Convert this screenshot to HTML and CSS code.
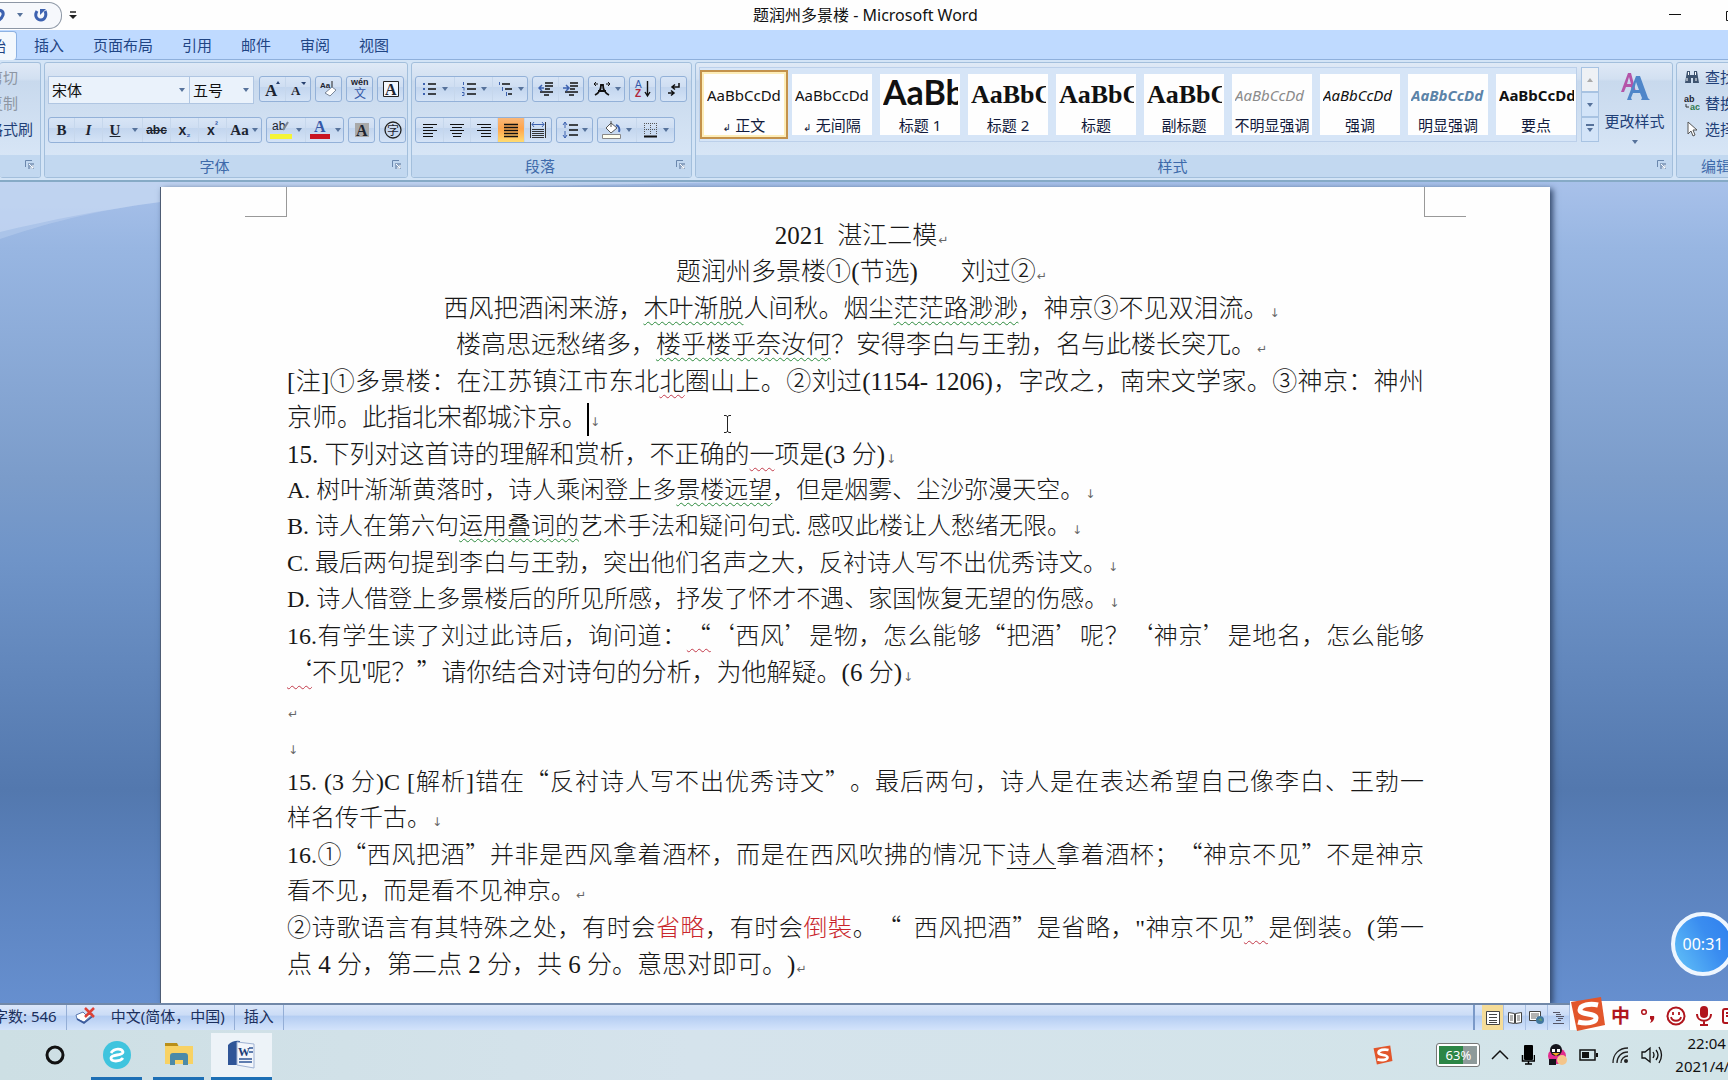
FILE: index.html
```html
<!DOCTYPE html>
<html lang="zh-CN">
<head>
<meta charset="utf-8">
<title>题润州多景楼 - Microsoft Word</title>
<link rel="stylesheet" href="styles.css">
</head>
<body>
<header class="titlebar">
  <div class="quick">
    <button class="plain" aria-label="撤销"><svg width="14" height="16" viewBox="0 0 14 16"><path d="M1 5c6-4 11-1 10 3-1 3-3 5-6 6" fill="none" stroke="#3d62b0" stroke-width="3"/></svg></button>
    <i class="arrow"></i>
    <button class="plain" aria-label="恢复"><svg width="14" height="14" viewBox="0 0 14 14"><path d="M3 3c-3 5 0 9 4 9s6-5 4-9" fill="none" stroke="#3d62b0" stroke-width="3"/><path d="M6 1v6L12 1z" fill="#3d62b0"/></svg></button>
  </div>
  <button class="plain" aria-label="自定义快速访问工具栏"><svg width="8" height="9" viewBox="0 0 8 9"><path d="M1 1h6" stroke="#222" stroke-width="1.5"/><path d="M0 4h8l-4 4z" fill="#222"/></svg></button>
  <h1 class="caption">题润州多景楼 - Microsoft Word</h1>
  <div class="window-buttons">
    <button class="plain" aria-label="最小化"><svg width="14" height="14"><path d="M1 6.500h12" stroke="#111"/></svg></button>
    <button class="plain" aria-label="还原"><svg width="14" height="14"><path d="M.5 3.500h10v9H.5z" fill="none" stroke="#111"/></svg></button>
  </div>
</header>

<nav class="tabs">
  <a href="#home" class="tab active">开始</a>
  <a href="#insert" class="tab">插入</a>
  <a href="#layout" class="tab">页面布局</a>
  <a href="#ref" class="tab">引用</a>
  <a href="#mail" class="tab">邮件</a>
  <a href="#review" class="tab">审阅</a>
  <a href="#view" class="tab">视图</a>
</nav>

<div class="ribbon">
  <section class="group clipboard">
    <div class="group-body stack">
      <button class="plain off">剪切</button>
      <button class="plain off">复制</button>
      <button class="plain">格式刷</button>
    </div>
    <footer class="group-name"><span></span><svg class="launch" width="9" height="9" viewBox="0 0 9 9"><path d="M.5 7V.5H7" fill="none" stroke="#6a87ad"/><path d="M3 3h6v6H3z" fill="#8ba3c2"/><path d="M4 4l4 4M8 5v3H5" stroke="#fff" fill="none"/></svg></footer>
  </section>

  <section class="group font">
    <div class="group-body rows">
      <div class="row">
        <div class="combos">
          <label class="combo wide"><select aria-label="字体"><option>宋体</option></select></label>
          <label class="combo"><select aria-label="字号"><option>五号</option></select></label>
        </div>
        <div class="set">
          <button class="tool"><svg width="18" height="18" viewBox="0 0 18 18"><text x="1" y="16" class="serif" font-size="17">A</text><path d="M12 4l2-3 2 3z" fill="#27406e"/></svg></button>
          <button class="tool"><svg width="18" height="18" viewBox="0 0 18 18"><text x="2" y="15" class="serif" font-size="13">A</text><path d="M12 2h5l-2 3z" fill="#27406e"/></svg></button>
        </div>
        <div class="set"><button class="tool"><svg width="20" height="20" viewBox="0 0 20 20"><text x="1" y="9" font-size="8" class="bold sans">Aa</text><path d="M13 2v8" stroke="#222"/><path d="M6 14l7-6 4 3-6 6z" fill="#fff" stroke="#7b8798"/></svg></button></div>
        <div class="set"><button class="tool"><svg width="20" height="22" viewBox="0 0 20 22"><text x="1" y="7" font-size="9" class="bold sans">wén</text><text x="4" y="20" font-size="12" class="blue cjk">文</text></svg></button></div>
        <div class="set"><button class="tool"><svg width="18" height="18" viewBox="0 0 18 18"><path d="M1.500 1.500h15v15h-15z" fill="#f3f7fd" stroke="#222"/><text x="3" y="15" class="serif" font-size="16">A</text></svg></button></div>
      </div>
      <div class="row">
        <div class="set">
          <button class="tool serif-b">B</button>
          <button class="tool serif-i">I</button>
          <button class="tool serif-b"><u>U</u></button>
          <button class="tool w15"><i class="arrow"></i></button>
          <button class="tool small"><s>abc</s></button>
          <button class="tool bold">x<sub>₂</sub></button>
          <button class="tool bold">x<sup>²</sup></button>
          <button class="tool w36 serif-a">Aa<i class="arrow"></i></button>
        </div>
        <div class="set">
          <button class="tool w38"><svg width="22" height="22" viewBox="0 0 22 22"><text x="2" y="11" font-size="12" class="sans">ab</text><path d="M13 11l5-8" stroke="#7b8798" stroke-width="2"/><path d="M0 15h22v5H0z" fill="#f4f436"/></svg><i class="arrow"></i></button>
          <button class="tool w38"><svg width="22" height="22" viewBox="0 0 22 22"><text x="5" y="13" font-size="16" class="serif blue">A</text><path d="M1 15h20v5H1z" fill="#c91422"/></svg><i class="arrow"></i></button>
        </div>
        <div class="set"><button class="tool"><svg width="16" height="16" viewBox="0 0 16 16"><path d="M1 1h14v14H1z" fill="#a9a9a9"/><text x="2" y="14" class="serif" font-size="16">A</text></svg></button></div>
        <div class="set"><button class="tool"><svg width="18" height="18" viewBox="0 0 18 18"><circle cx="9" cy="9" r="8" fill="none" stroke="#222" stroke-width="1.300"/><text x="3" y="14" font-size="12" class="cjk">字</text></svg></button></div>
      </div>
    </div>
    <footer class="group-name"><span>字体</span><svg class="launch" width="9" height="9" viewBox="0 0 9 9"><path d="M.5 7V.5H7" fill="none" stroke="#6a87ad"/><path d="M3 3h6v6H3z" fill="#8ba3c2"/><path d="M4 4l4 4M8 5v3H5" stroke="#fff" fill="none"/></svg></footer>
  </section>

  <section class="group para">
    <div class="group-body rows">
      <div class="row">
        <div class="set">
          <button class="tool w38"><svg width="16" height="16" viewBox="0 0 16 16"><path d="M6 3h8M6 8h8M6 13h8" stroke="#111" stroke-width="1.300"/><path d="M1 2h2v2H1zM1 7h2v2H1zM1 12h2v2H1z" fill="#3d62b0"/></svg><i class="arrow"></i></button>
          <button class="tool w38"><svg width="16" height="16" viewBox="0 0 16 16"><path d="M6 3h9M6 8h9M6 13h9" stroke="#111" stroke-width="1.300"/><path d="M2.500 1v3M1 6.500h2v3M1 11.500h2v3H1" stroke="#3d62b0" fill="none"/></svg><i class="arrow"></i></button>
          <button class="tool w36"><svg width="17" height="16" viewBox="0 0 17 16"><path d="M5 3h8M8 8h7M11 13h4" stroke="#111" stroke-width="1.300"/><path d="M2.500 1v3M5.500 6v4M9.500 11v4" stroke="#3d62b0"/></svg><i class="arrow"></i></button>
        </div>
        <div class="set">
          <button class="tool"><svg width="16" height="16" viewBox="0 0 16 16"><path d="M7 2h8M7 5h8M7 8h5M2 11h13M6 14h5" stroke="#111" stroke-width="1.500"/><path d="M6 7H1M4 4L1 7l3 3" stroke="#3d62b0" fill="none" stroke-width="1.500"/></svg></button>
          <button class="tool"><svg width="16" height="16" viewBox="0 0 16 16"><path d="M7 2h8M7 5h8M7 8h5M2 11h13M6 14h5" stroke="#111" stroke-width="1.500"/><path d="M0 7h5M3 4l3 3-3 3" stroke="#3d62b0" fill="none" stroke-width="1.500"/></svg></button>
        </div>
        <div class="set"><button class="tool w36"><svg width="18" height="16" viewBox="0 0 18 16"><path d="M2 14C6 12 8 9 8 4h2c0 5 2 8 6 10M5 10h8" stroke="#111" stroke-width="1.800" fill="none"/><path d="M1 3h4M3 1L1 3l2 2M17 3h-4M15 1l2 2-2 2" stroke="#111" fill="none"/></svg><i class="arrow"></i></button></div>
        <div class="set"><button class="tool"><svg width="18" height="18" viewBox="0 0 18 18"><text x="1" y="8" font-size="10" class="blue sans">A</text><text x="1" y="17" font-size="10" class="red bold sans">Z</text><path d="M13.500 1v14M11 12l2.500 4 2.500-4" stroke="#111" stroke-width="1.400" fill="none"/></svg></button></div>
        <div class="set"><button class="tool"><svg width="16" height="16" viewBox="0 0 16 16"><path d="M13 2v4H7M9 3.500L6 6l3 2.500M2 12h5M5 9.500l3 2.500-3 2.500" stroke="#111" stroke-width="1.500" fill="none"/></svg></button></div>
      </div>
      <div class="row">
        <div class="set align">
          <button class="tool"><svg width="16" height="16"><path d="M1 2.500h14M1 5.500h10M1 8.500h14M1 11.500h10M1 14.500h10" stroke="#111"/></svg></button>
          <button class="tool"><svg width="16" height="16"><path d="M1 2.500h14M3 5.500h10M1 8.500h14M3 11.500h10M4 14.500h8" stroke="#111"/></svg></button>
          <button class="tool"><svg width="16" height="16"><path d="M1 2.500h14M5 5.500h10M1 8.500h14M5 11.500h10M5 14.500h10" stroke="#111"/></svg></button>
          <button class="tool on"><svg width="16" height="16"><path d="M1 2.500h14M1 5.500h14M1 8.500h14M1 11.500h14M1 14.500h14" stroke="#111" stroke-width="1.500"/></svg></button>
          <button class="tool"><svg width="18" height="18"><path d="M1.500 1v16M16.500 1v16" stroke="#333"/><path d="M3 3.500h12M5 1L3 3.500 5 6M13 1l2 2.500L13 6" stroke="#3d62b0" fill="none"/><path d="M3 8.500h12M3 10.500h12M3 12.500h12M3 14.500h12M3 16.500h12" stroke="#333"/></svg></button>
        </div>
        <div class="set"><button class="tool w36"><svg width="16" height="18"><path d="M7 4h9M7 9h9M7 14h9" stroke="#111" stroke-width="1.500"/><path d="M3 1v6M1 4l2-3 2 3M3 10v7M1 14l2 3 2-3" stroke="#3d62b0" fill="none"/></svg><i class="arrow"></i></button></div>
        <div class="set">
          <button class="tool w38"><svg width="20" height="20"><path d="M4 8l5-5 6 5-6 5z" fill="#fff" stroke="#555"/><path d="M9 1v6" stroke="#555"/><path d="M14 5c3 1 4 4 3 7" stroke="#3d62b0" stroke-width="2" fill="none"/><path d="M.5 14.500h18v4H.5z" fill="#fffff0" stroke="#888"/></svg><i class="arrow"></i></button>
          <button class="tool w38"><svg width="16" height="16"><path d="M1.500 1v12M7.500 1v12M13.500 1v12M1 1.500h13M1 7.500h13" stroke="#555" stroke-dasharray="1 1"/><path d="M1 14.500h13" stroke="#111" stroke-width="2"/></svg><i class="arrow"></i></button>
        </div>
      </div>
    </div>
    <footer class="group-name"><span>段落</span><svg class="launch" width="9" height="9" viewBox="0 0 9 9"><path d="M.5 7V.5H7" fill="none" stroke="#6a87ad"/><path d="M3 3h6v6H3z" fill="#8ba3c2"/><path d="M4 4l4 4M8 5v3H5" stroke="#fff" fill="none"/></svg></footer>
  </section>

  <section class="group styles">
    <div class="group-body gallery-row">
      <div class="gallery">
        <button class="style picked"><span class="sample">AaBbCcDd</span><span class="name"><small>↲</small> 正文</span></button>
        <button class="style"><span class="sample">AaBbCcDd</span><span class="name"><small>↲</small> 无间隔</span></button>
        <button class="style"><span class="sample huge">AaBb</span><span class="name">标题 1</span></button>
        <button class="style"><span class="sample head">AaBbC</span><span class="name">标题 2</span></button>
        <button class="style"><span class="sample head">AaBbC</span><span class="name">标题</span></button>
        <button class="style"><span class="sample head">AaBbC</span><span class="name">副标题</span></button>
        <button class="style"><span class="sample em grey">AaBbCcDd</span><span class="name">不明显强调</span></button>
        <button class="style"><span class="sample em">AaBbCcDd</span><span class="name">强调</span></button>
        <button class="style"><span class="sample em strong steel">AaBbCcDd</span><span class="name">明显强调</span></button>
        <button class="style"><span class="sample strong">AaBbCcDd</span><span class="name">要点</span></button>
      </div>
      <div class="scroller">
        <button class="dim" aria-label="上一行"><i class="arrow up"></i></button>
        <button aria-label="下一行"><i class="arrow"></i></button>
        <button aria-label="其他"><i class="arrow bar"></i></button>
      </div>
      <button class="plain change">
        <svg width="32" height="30" viewBox="0 0 32 30"><path d="M2 20L9 1h3l5 19h-4l-1-5H7l-2 5zM8 12h4l-2-7z" fill="#b455a8"/><path d="M8 28L17 4h4l8 22 2 2h-9l1-2-2-5h-7l-2 5 1 2zM15 18h5l-3-8z" fill="#4f86c9"/></svg>
        更改样式
        <i class="arrow"></i>
      </button>
    </div>
    <footer class="group-name"><span>样式</span><svg class="launch" width="9" height="9" viewBox="0 0 9 9"><path d="M.5 7V.5H7" fill="none" stroke="#6a87ad"/><path d="M3 3h6v6H3z" fill="#8ba3c2"/><path d="M4 4l4 4M8 5v3H5" stroke="#fff" fill="none"/></svg></footer>
  </section>

  <section class="group edit">
    <div class="group-body stack">
      <button class="plain"><svg width="16" height="16" viewBox="0 0 16 16"><path d="M3 2h3v4h4V2h3l2 12H9V9H7v5H1z" fill="#3e536f"/><path d="M3 9v3M12 9v3M4.500 3v3M11.500 3v3" stroke="#fff"/></svg>查找</button>
      <button class="plain"><svg width="16" height="16" viewBox="0 0 16 16"><text x="0" y="7" font-size="9" class="sans bold">ab</text><text x="6" y="15" font-size="9" class="sans bold green">ac</text><path d="M2 9v3h3" stroke="#333" fill="none"/></svg>替换</button>
      <button class="plain"><svg width="16" height="16" viewBox="0 0 16 16"><path d="M4 1v12l3-3 2 5 2-1-2-5h4z" fill="#fff" stroke="#555"/></svg>选择</button>
    </div>
    <footer class="group-name"><span>编辑</span></footer>
  </section>
</div>

<main class="canvas">
  <svg class="swoosh" viewBox="0 0 1550 64" preserveAspectRatio="none"><path d="M0 0H750C500 4 250 10 160 20 100 28 50 38 0 50z" fill="#c9daf4" opacity=".6"/><path d="M0 0H700C480 6 260 10 160 20 90 29 45 42 0 57z" fill="#c9daf4" opacity=".35"/></svg>
  <article class="page">
    <i class="crop left"></i><i class="crop right"></i>
    <div class="block center">
      <p><span class="la">2021</span>&ensp;湛江二模<span class="mk">↵</span></p>
      <p>题润州多景楼①<span class="la">(</span>节选<span class="la">)</span>&emsp;&ensp; 刘过②<span class="mk">↵</span></p>
    </div>
    <div class="block center">
      <p>西风把酒闲来游，<span class="gw">木叶渐脱</span>人间秋。烟尘<span class="gw">茫茫路渺渺</span>，神京③不见双泪流。<span class="mk">↓</span></p>
      <p>楼高思远愁绪多，<span class="gw">楼乎楼乎奈汝何</span>？安得李白与王勃，名与此楼长突兀。<span class="mk">↵</span></p>
    </div>
    <div class="block">
      <p class="full"><span class="la">[</span>注<span class="la">]</span>①多景楼：在江苏镇江市东北<span class="rw">北</span>圈山上。②刘过<span class="la">(1154- 1206)</span>，字改之，南宋文学家。③神京：神州</p>
      <p>京师。此指北宋都城汴京。<span class="caret"></span><span class="mk">↓</span></p>
    </div>
    <div class="block">
      <p><span class="la">15. </span>下列对这首诗的理解和赏析，不正确的<span class="rw">一</span>项是<span class="la">(3 </span>分<span class="la">)</span><span class="mk">↓</span></p>
      <p class="dense"><span class="la">A. </span>树叶渐渐黄落时，诗人乘闲登上多<span class="gw">景楼远望</span>，但是烟雾、尘沙弥漫天空。<span class="mk">↓</span></p>
      <p class="dense"><span class="la">B. </span>诗人在第六句<span class="gw">运用叠词的</span>艺术手法和疑问句式<span class="la">. </span>感叹此楼让人愁绪无限。<span class="mk">↓</span></p>
    </div>
    <div class="block dense">
      <p><span class="la">C. </span>最后两句提到李白与王勃，突出他们名声之大，反衬诗人写不出优秀诗文。<span class="mk">↓</span></p>
      <p><span class="la">D. </span>诗人借登上多景楼后的所见所感，抒发了怀才不遇、家国恢复无望的伤感。<span class="mk">↓</span></p>
    </div>
    <div class="block">
      <p class="dense full"><span class="la">16.</span>有学生读了刘过此诗后，询问道：<span class="rw">“</span>‘西风’是物，怎么能够“把酒’呢？‘神京’是地名，怎么能够</p>
      <p><span class="rw">‘</span>不见<span class="la">'</span>呢？”请你结合对诗句的分析，为他解疑。<span class="la">(6 </span>分<span class="la">)</span><span class="mk">↓</span></p>
    </div>
    <div class="block">
      <p><span class="mk">↵</span></p>
      <p><span class="mk">↓</span></p>
    </div>
    <div class="block dense">
      <p class="full"><span class="la">15. (3 </span>分<span class="la">)C [</span>解析<span class="la">]</span>错在“反衬诗人写不出优秀诗文”。最后两句，诗人是在表达希望自己像李白、王勃一</p>
      <p>样名传千古。<span class="mk">↓</span></p>
    </div>
    <div class="block dense">
      <p class="full"><span class="la">16.</span>①“西风把酒”并非是西风拿着酒杯，而是在西风吹拂的情况下<u>诗人</u>拿着酒杯；“神京不见”不是神京</p>
      <p>看不见，而是看不见神京。<span class="mk">↵</span></p>
    </div>
    <div class="block">
      <p class="dense full">②诗歌语言有其特殊之处，有时会<em>省略</em>，有时会<em>倒裝</em>。“&ensp;西风把酒”是省略，<span class="la">"</span>神京不见<span class="rw">”</span>是倒装。<span class="la">(</span>第一</p>
      <p>点<span class="la"> 4 </span>分，第二点<span class="la"> 2 </span>分，共<span class="la"> 6 </span>分。意思对即可。<span class="la">)</span><span class="mk">↵</span></p>
    </div>
    <svg class="ibeam" width="9" height="18"><path d="M1 .5h2l1.500 1L6 .5h2M4.500 1v16M1 17.500h2l1.500-1 1.500 1h2" fill="none" stroke="#222"/></svg>
  </article>
  <div class="timer">00:31</div>
</main>

<footer class="status">
  <div class="status-left">
    <span class="cell words">字数: 546</span>
    <span class="cell"><svg width="22" height="18" viewBox="0 0 22 18"><path d="M2 8l7-3 3 3 7-1-9 8-7-3z" fill="#fff" stroke="#5a78b0"/><path d="M3 12l7 4 9-7" stroke="#3a5a9a" fill="none" stroke-width="1.500"/><path d="M11 1l9 9M20 1l-9 9" stroke="#dd4338" stroke-width="2.500"/></svg></span>
    <span class="cell lang">中文(简体，中国)</span>
    <span class="cell">插入</span>
  </div>
  <div class="views">
    <button class="on" aria-label="页面视图"><svg width="14" height="14"><path d="M.5.5h13v13H.5z" fill="#fff" stroke="#444"/><path d="M3 3.500h8M3 6.500h8M3 9.500h8M3 11.500h8" stroke="#444"/></svg></button>
    <button aria-label="阅读版式"><svg width="14" height="14"><path d="M.5 1.500l6 1v10l-6-1zM13.500 1.500l-6 1v10l6-1z" fill="#fff" stroke="#444"/><path d="M2 5h3M2 7h3M2 9h3M9 5h3M9 7h3M9 9h3" stroke="#666"/></svg></button>
    <button aria-label="Web 版式"><svg width="16" height="14"><path d="M.5.5h11v9H.5z" fill="#fff" stroke="#444"/><path d="M2 3h8M2 5h8M2 7h5" stroke="#666"/><circle cx="11" cy="9" r="4" fill="#41789f"/><path d="M9 9l3-2 1 3z" fill="#67a06b"/></svg></button>
    <button aria-label="大纲视图"><svg width="14" height="14"><path d="M1 1.500h7M4 3.500h5M4 5.500h8M6 7.500h5M4 9.500h5M1 12.500h11" stroke="#556"/></svg></button>
  </div>
  <div class="ime">
    <svg class="sogou" width="36" height="36" viewBox="0 0 36 36"><path d="M1 6L31 1l4 28-28 6z" fill="#e2562b"/><path d="M28 9C20 7 10 9 10 14s16 3 16 8-10 6-18 4" fill="none" stroke="#fff" stroke-width="5"/></svg>
    <b>中</b>
    <svg width="16" height="18"><circle cx="4" cy="5" r="2.300" fill="none" stroke="#b0151d" stroke-width="1.500"/><path d="M10 9h4c1 3-1 6-4 7 1-2 2-3 0-4z" fill="#b0151d"/></svg>
    <svg width="20" height="20" viewBox="0 0 20 20"><circle cx="10" cy="10" r="8.500" fill="none" stroke="#b0151d" stroke-width="2"/><path d="M7 6v3M13 6v3M5 11c1 5 9 5 10 0" fill="none" stroke="#b0151d" stroke-width="1.800"/></svg>
    <svg width="16" height="20" viewBox="0 0 16 20"><rect x="4" y="0" width="8" height="12" rx="4" fill="#b0151d"/><path d="M1 8c0 9 14 9 14 0M8 14v5M4 19h8" fill="none" stroke="#b0151d" stroke-width="2"/></svg>
    <svg width="22" height="18" viewBox="0 0 22 18"><rect x="1" y="2" width="20" height="14" rx="2" fill="none" stroke="#b0151d" stroke-width="2"/><path d="M4 6h14M4 9h14" stroke="#b0151d" stroke-width="2" stroke-dasharray="3 1"/><path d="M6 13h10" stroke="#b0151d" stroke-width="2"/></svg>
  </div>
</footer>

<footer class="taskbar">
  <div class="apps">
    <button class="app search" aria-label="搜索"><svg width="20" height="20"><circle cx="10" cy="8" r="7" fill="none" stroke="#222" stroke-width="1.500"/></svg></button>
    <button class="app" aria-label="Cortana"><svg width="20" height="20"><circle cx="10" cy="10" r="8" fill="none" stroke="#111" stroke-width="3"/></svg></button>
    <button class="app open" aria-label="浏览器"><svg width="28" height="28" viewBox="0 0 28 28"><circle cx="14" cy="14" r="14" fill="#3fc4de"/><path d="M8 12c3-5 11-5 12-1 0 4-12 2-12 6 0 4 9 4 12 0" fill="none" stroke="#fff" stroke-width="2.800"/></svg></button>
    <button class="app open" aria-label="文件资源管理器"><svg width="28" height="26" viewBox="0 0 28 26"><path d="M0 1h12l2 4H0z" fill="#b98f1a"/><path d="M0 4h28v18H0z" fill="#f8d264"/><path d="M5 23v-9q0-3 3-3h12q3 0 3 3v9h-5v-5h-8v5z" fill="#4b8aa8"/></svg></button>
    <button class="app open current" aria-label="Word"><svg width="30" height="30" viewBox="0 0 30 30"><path d="M1 5q5-5 12-4v24H1z" fill="#2f5597"/><path d="M10 2l17 2v24l-17-3z" fill="#f3f6fb" stroke="#9fb2d3"/><text x="11" y="16" font-size="12" class="serif navy">W</text><path d="M22 8h4M22 12h4M12 19h13M12 22h13" stroke="#2f5597" stroke-width="1.500"/></svg></button>
  </div>
  <div class="tray">
    <svg class="s-mini" width="20" height="20" viewBox="0 0 36 36"><path d="M1 6L31 1l4 28-28 6z" fill="#e2562b"/><path d="M28 9C20 7 10 9 10 14s16 3 16 8-10 6-18 4" fill="none" stroke="#fff" stroke-width="5"/></svg>
    <div class="battery"><span>63%</span></div>
    <svg width="18" height="12"><path d="M1 10l8-8 8 8" fill="none" stroke="#111" stroke-width="1.500"/></svg>
    <svg width="14" height="20"><rect x="3" width="9" height="15" rx="1" fill="#000"/><path d="M1.500 10v6h12v-6M7.500 16v3M4 19h7" fill="none" stroke="#000" stroke-width="1.500"/></svg>
    <svg width="20" height="22"><ellipse cx="10" cy="12" rx="9" ry="8" fill="#e22b8c"/><circle cx="9" cy="6" r="6" fill="#15151c"/><path d="M5 5h3v3H5zM10 5h3v3h-3z" fill="#fff"/><path d="M5 9h8l-4 3z" fill="#f5a623"/><path d="M2 15h7v6H2z" fill="#15151c"/><circle cx="15" cy="16" r="5" fill="#f4c58a"/></svg>
    <svg width="20" height="13"><path d="M1 1h15v10H1z" fill="none" stroke="#111" stroke-width="1.500"/><path d="M3 3h7v6H3z" fill="#111"/><path d="M18 4v4" stroke="#111" stroke-width="2"/></svg>
    <svg width="18" height="18"><path d="M2 17C2 8 8 2 17 2M6 17c0-6 4-11 11-11M10 17c0-4 3-7 7-7" fill="none" stroke="#222" stroke-width="1.300"/><circle cx="15" cy="15" r="2" fill="#222"/></svg>
    <svg width="22" height="18"><path d="M1 6h3l5-4v14l-5-4H1z" fill="none" stroke="#111" stroke-width="1.300"/><path d="M12 6q2 3 0 6M15 4q4 5 0 10M18 1q5 8 0 16" fill="none" stroke="#111" stroke-width="1.300"/></svg>
    <div class="clock"><time>22:04</time><time>2021/4/8</time></div>
  </div>
</footer>
</body>
</html>
```
FILE: styles.css
```css
* { box-sizing: border-box; }

body {
  margin: 0;
  height: 100vh;
  display: flex;
  flex-direction: column;
  overflow: hidden;
  background: #bfdaff;
  color: #1f3f77;
  font: 15px/20px "Noto Sans", "Noto Sans CJK SC", sans-serif;
  text-spacing-trim: space-all;
}

button {
  font: inherit;
  color: inherit;
  border: 0;
  padding: 0;
  background: none;
}

svg { flex: none; display: block; }
svg text { fill: #1d2430; }
svg .serif { font-family: "Liberation Serif", serif; font-weight: bold; }
svg .sans { font-family: "Liberation Sans", sans-serif; }
svg .cjk { font-family: "Noto Sans CJK SC", sans-serif; }
svg .bold { font-weight: bold; }
svg .blue { fill: #3558a8; }
svg .red { fill: #b1283c; }
svg .green { fill: #2f7a4d; }
svg .navy { fill: #1f3f77; }

.plain { display: flex; align-items: center; gap: 5px; white-space: nowrap; }

.arrow {
  border: 3px solid transparent;
  border-top: 4px solid #56729b;
  border-bottom: 0;
}
.arrow.up { border-top: 0; border-bottom: 4px solid #aaa; }
.arrow.bar { position: relative; }
.arrow.bar::before {
  content: "";
  position: absolute;
  left: -4px;
  top: -8px;
  width: 8px;
  height: 2px;
  background: #56729b;
}

/* Title bar */
.titlebar {
  flex: none;
  height: 30px;
  display: flex;
  align-items: center;
  background: #fefefe;
}
.quick {
  width: 62px;
  height: 27px;
  margin-right: 7px;
  border: 1px solid #8d97a5;
  border-left: 0;
  border-radius: 0 13px 13px 0;
  display: flex;
  align-items: center;
  gap: 11px;
  background: #f6f8fc;
}
.quick button:first-child { margin-left: -8px; }
.caption {
  flex: 1;
  margin: 0;
  padding-right: 14px;
  text-align: center;
  font-size: 16px;
  font-weight: 400;
  color: #111;
}
.window-buttons { display: flex; gap: 44px; margin-right: -12px; }

/* Tabs */
.tabs {
  flex: none;
  height: 30px;
  margin-left: -26px;
  display: flex;
  border-bottom: 1px solid #8fb0dc;
}
.tab {
  padding: 5px 14px 0 15px;
  color: #1f4584;
  text-decoration: none;
}
.tab.active {
  width: 43px;
  margin: 1px 2px -1px 0;
  padding: 4px 0 0 1px;
  border: 1px solid #8db2e3;
  border-bottom: 0;
  border-radius: 4px;
  background: #f3f8fd;
}

/* Ribbon */
.ribbon {
  flex: none;
  height: 122px;
  padding: 2px 0;
  display: flex;
  gap: 3px;
  background: #d3e4f6;
  border-bottom: 2px solid #86aac6;
}
.group {
  flex: none;
  display: flex;
  flex-direction: column;
  border: 1px solid #a3bfdc;
  border-radius: 3px;
  background: linear-gradient(#dfe9f6, #d2e0f1 14%, #c8d9ed 16%, #d9e7f7 90%);
  overflow: hidden;
}
.group-body { flex: 1; }
.group-name {
  height: 22px;
  display: flex;
  align-items: center;
  padding-right: 6px;
  background: #c2d8f0;
  color: #3e6aaa;
}
.group-name span { flex: 1; text-align: center; padding-right: 8px; }
.launch { margin-top: -4px; }

.stack { display: flex; flex-direction: column; gap: 6px; padding-top: 4px; }
.off { color: #8d96a3; }
.clipboard { width: 41px; border-left: 0; }
.clipboard .stack { align-items: flex-end; padding-right: 7px; }
.clipboard .stack .off { margin-right: 15px; }
.font { width: 364px; }
.para { width: 281px; }
.styles { flex: 1; }
.edit { width: 90px; margin-right: -38px; }
.edit .stack { padding-left: 7px; }
.edit .group-name span { padding-right: 4px; }

.rows { padding: 13px 3px 0; display: flex; flex-direction: column; gap: 15px; }
.row { display: flex; gap: 4px; height: 26px; }
.set {
  display: flex;
  border: 1px solid #93b1d8;
  border-radius: 3px;
  background: linear-gradient(#d8e5f6, #cfdef2 40%, #c2d5ee 42%, #d4e3f6);
}
.tool {
  width: 25px;
  display: flex;
  align-items: center;
  justify-content: center;
  gap: 4px;
  color: #1d2430;
}
.tool + .tool { border-left: 1px solid #c6d7ec; }
.align .tool { width: 27px; }
.tool.w15 { width: 15px; border-left: 0; }
.w36 { width: 35px; }
.w38 { width: 38px; }
.tool.on { background: linear-gradient(#f9b77a, #ffa54c 45%, #ffdb70); }
.serif-b { font: bold 15px "Liberation Serif", serif; }
.serif-i { width: 28px; font: italic bold 15px "Liberation Serif", serif; }
.serif-a { font: bold 15px "Liberation Serif", serif; gap: 3px; }
.small { width: 28px; font: bold 12px "Liberation Sans", sans-serif; }
.tool.bold { width: 28px; gap: 0; font: bold 14px "Liberation Sans", sans-serif; }
.tool sub, .tool sup { font-size: 9px; color: #3558a8; line-height: 9px; }
.tool sub { padding-top: 9px; }
.tool sup { padding-bottom: 9px; }

.combos { display: flex; height: 28px; margin-right: 1px; }
.combo {
  width: 65px;
  display: flex;
  align-items: center;
  padding: 0 4px 0 3px;
  border: 1px solid #b0c6e2;
  background: #eaf2fb;
}
.combo.wide { width: 141px; border-right: 0; }
.combo::after {
  content: "";
  border: 3px solid transparent;
  border-top: 4px solid #56729b;
  border-bottom: 0;
}
.combo select {
  flex: 1;
  appearance: none;
  padding: 0;
  border: 0;
  background: none;
  font: inherit;
  color: #111;
}

/* Style gallery */
.gallery-row { display: flex; padding: 4px 2px 0 3px; }
.gallery {
  flex: 1;
  height: 75px;
  display: flex;
  gap: 8px;
  padding: 6px 4px;
  border: 1px solid #bcd0ea;
  background: #d6e5f7;
  overflow: hidden;
}
.style {
  flex: none;
  width: 80px;
  height: 61px;
  display: flex;
  flex-direction: column;
  background: #fefefe;
  color: #111a3c;
}
.style.picked { outline: 2px solid #c3924c; outline-offset: 2px; box-shadow: 0 0 0 2px #fdedb8; }
.sample {
  width: 75px;
  height: 41px;
  margin-left: 3px;
  line-height: 42px;
  font-size: 15px;
  text-align: left;
  color: #111;
  white-space: nowrap;
  overflow: hidden;
}
.sample.huge { font: bold 34px/36px Lato, sans-serif; }
.sample.head { font: bold 26px/42px "Liberation Serif", serif; }
.sample.em { font-style: italic; }
.sample.strong { font-weight: 700; }
.sample.grey { color: #8b8b8b; }
.sample.steel { color: #5b83a8; }
.name { line-height: 20px; text-align: center; white-space: nowrap; }
.name small { font: 10px "DejaVu Sans", sans-serif; }
.scroller { width: 18px; height: 75px; margin-left: 4px; display: flex; flex-direction: column; }
.scroller button {
  flex: 1;
  display: flex;
  align-items: center;
  justify-content: center;
  border: 1px solid #a8c3e2;
  background: #d3e4f8;
}
.scroller .dim { background: #eef1f5; }
.change { width: 71px; height: 75px; flex-direction: column; gap: 9px; padding-top: 5px; }

/* Document area */
.canvas {
  position: relative;
  flex: 1;
  min-height: 0;
  display: flex;
  justify-content: center;
  padding: 5px 18px 0 0;
  background: linear-gradient(#a8c1ea, #98b6e2 8%, #7b9cca 36%, #6f94c8 46%, #5378ae 74%, #5b82bd 84%, #668fcf);
  overflow: hidden;
}
.swoosh { position: absolute; left: 0; top: 0; width: 90%; height: 64px; }
.page {
  position: relative;
  width: 1390px;
  height: 100%;
  padding: 28px 126px 0 126px;
  background: #fefefe;
  border-left: 1px solid #4e5d74;
  box-shadow: 3px 2px 6px #33486b;
  color: #181818;
  font: 300 25px/36px "Noto Sans CJK SC", sans-serif;
  display: flex;
  flex-direction: column;
  gap: 1px;
}
.block p { margin: 0; height: 36px; white-space: nowrap; }
.block.center { text-align: center; padding-left: 12px; }
.dense { font-size: 24px; }
.full { text-align: justify; text-align-last: justify; }
.la { font-family: "Liberation Serif", serif; font-weight: 400; line-height: 0; white-space: pre; }
.mk { margin-left: 1px; font: 12px/0 "DejaVu Sans", sans-serif; color: #666; }
.block em { font-style: normal; color: #c9262c; }
.block u { text-decoration-thickness: 1px; text-underline-offset: 5px; }
.gw, .rw { text-decoration: underline wavy 1px #2c8a3c; text-underline-offset: 4px; text-decoration-skip-ink: none; }
.rw { text-decoration-color: #c23a4a; }
.caret { display: inline-block; width: 2px; height: 33px; vertical-align: middle; background: #000; }
.crop { position: absolute; top: 0; width: 42px; height: 30px; border-bottom: 1px solid #999; }
.crop.left { left: 84px; border-right: 1px solid #999; }
.crop.right { right: 84px; border-left: 1px solid #999; }
.ibeam { position: absolute; left: 562px; top: 228px; }

.timer {
  position: absolute;
  right: -7px;
  bottom: 27px;
  width: 64px;
  height: 64px;
  border: 4px solid #eef6ff;
  border-radius: 50%;
  background: linear-gradient(60deg, #63c3f8, #3a8df0 60%, #2f7fee);
  color: #fff;
  font-size: 16px;
  line-height: 56px;
  text-align: center;
}

/* Status bar */
.status {
  position: relative;
  flex: none;
  height: 27px;
  display: flex;
  justify-content: space-between;
  border-top: 2px solid #7188a8;
  background: linear-gradient(#dbe7fa, #cbdcf6 40%, #b4cdf2 45%, #d3e3fb);
  color: #1b2f5c;
}
.status-left { display: flex; margin-left: -16px; }
.cell { display: flex; align-items: center; padding: 0 9px 3px; border-right: 1px solid #94aed6; }
.cell:nth-child(2) { padding: 0 4px 3px 7px; border: 0; }
.cell.lang { padding-left: 11px; }
.views { display: flex; padding-left: 7px; margin-right: 158px; border-left: 2px solid #7a99c8; }
.views button { width: 22px; display: flex; align-items: center; justify-content: center; border-right: 1px solid #a9c0e4; }
.views .on { background: #f5dc98; }
.ime {
  position: absolute;
  right: -16px;
  top: -4px;
  height: 29px;
  padding-left: 41px;
  display: flex;
  align-items: center;
  gap: 10px;
  background: #fefefe;
  color: #b0151d;
}
.ime b { font-size: 19px; }
.sogou { position: absolute; left: 0; top: -5px; }

/* Task bar */
.taskbar {
  flex: none;
  height: 50px;
  display: flex;
  justify-content: space-between;
  background: linear-gradient(90deg, #cddfe4, #d5e3ec 40%, #d2e4e8);
  color: #111;
}
.apps { display: flex; gap: 11px; margin-left: -43px; }
.app {
  width: 51px;
  display: flex;
  align-items: center;
  justify-content: center;
}
.app.search { width: 63px; margin-right: -2px; }
.app.open { border-bottom: 3px solid #1d6fb5; border-top: 3px solid transparent; }
.app.current { width: 61px; margin-left: -4px; background: #edf3f8; background-clip: padding-box; }
.tray { display: flex; align-items: center; gap: 12px; margin-right: -10px; }
.s-mini { margin-right: 32px; }
.battery {
  width: 42px;
  height: 22px;
  border: 2px solid #fff;
  outline: 1px solid #777;
  border-radius: 2px;
  background: linear-gradient(90deg, #2c8646 63%, #8e9a9a 63%);
  color: #fff;
  font-size: 13px;
  line-height: 18px;
  text-align: center;
}
.clock { display: flex; flex-direction: column; align-items: center; line-height: 23px; }
```
